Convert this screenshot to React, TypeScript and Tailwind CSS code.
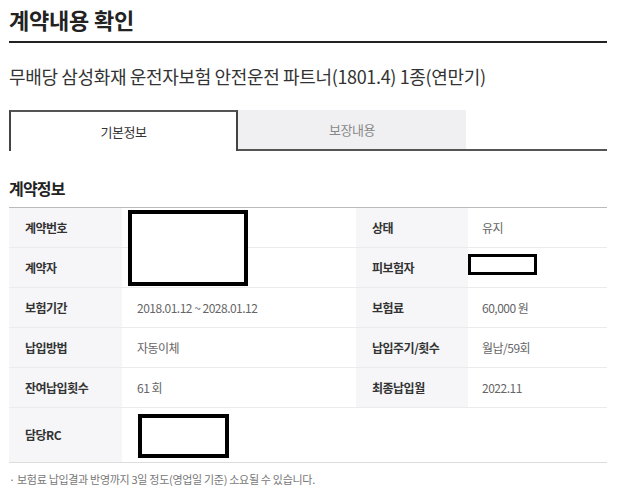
import React from 'react';

const rows: { l1: string; v1: string; l2?: string; v2?: string }[] = [
  { l1: '계약번호', v1: '', l2: '상태', v2: '유지' },
  { l1: '계약자', v1: '', l2: '피보험자', v2: '' },
  { l1: '보험기간', v1: '2018.01.12 ~ 2028.01.12', l2: '보험료', v2: '60,000 원' },
  { l1: '납입방법', v1: '자동이체', l2: '납입주기/횟수', v2: '월납/59회' },
  { l1: '잔여납입횟수', v1: '61 회', l2: '최종납입월', v2: '2022.11' },
];

const font = { fontFamily: '"Noto Sans CJK KR", "Noto Sans", sans-serif' };

export default function App() {
  return (
    <div className="relative w-[620px] h-[498px] bg-white text-[#222] pl-[9px] pr-[13px]" style={font}>
      {/* Title */}
      <h1 className="pt-[4px] h-[41px] text-[22px] font-bold tracking-[-0.2px] leading-[30px]">계약내용 확인</h1>
      <div className="h-[2px] bg-[#222]" />

      {/* Product name */}
      <p className="mt-[19px] text-[18px] tracking-[-0.35px] leading-[28px] text-[#333]">
        무배당 삼성화재 운전자보험 안전운전 파트너(1801.4) 1종(연만기)
      </p>

      {/* Tabs */}
      <div className="mt-[20px] flex h-[41px]">
        <div className="w-[229px] border-t-2 border-x-2 border-[#444] border-t-[#555] flex items-center justify-center text-[13px] text-[#333] tracking-[-0.5px]">
          기본정보
        </div>
        <div className="flex-1 flex items-end border-b-2 border-[#555]">
          <div className="w-[228px] h-full bg-[#f0f0f2] flex items-center justify-center text-[13px] text-[#888] tracking-[-0.5px]">
            보장내용
          </div>
        </div>
      </div>

      {/* Section */}
      <h2 className="mt-[25px] text-[16px] font-bold tracking-[-0.8px] leading-[24px]">계약정보</h2>

      <div className="mt-[7px] border-t border-[#bbb]">
        {rows.map((r) => (
          <div key={r.l1} className="grid grid-cols-[113px_234px_112px_1fr] h-[40px] border-b border-[#ebebeb] text-[12px] tracking-[-0.5px]">
            <div className="bg-[#f6f6f8] flex items-center pl-[16px] font-bold text-[#333]">{r.l1}</div>
            <div className="flex items-center pl-[15px] text-[#666]">{r.v1}</div>
            <div className="bg-[#f6f6f8] flex items-center pl-[16px] font-bold text-[#333]">{r.l2}</div>
            <div className="flex items-center pl-[14px] text-[#666]">{r.v2}</div>
          </div>
        ))}
        <div className="grid grid-cols-[113px_1fr] h-[55px] border-b border-[#ddd] text-[12px] tracking-[-0.5px]">
          <div className="bg-[#f6f6f8] flex items-center pl-[16px] font-bold text-[#333]">담당RC</div>
          <div />
        </div>
      </div>

      <p className="mt-[8px] text-[11px] text-[#777] tracking-[-0.3px]">· 보험료 납입결과 반영까지 3일 정도(영업일 기준) 소요될 수 있습니다.</p>

      {/* Redaction boxes */}
      <div className="absolute left-[128px] top-[210px] w-[120px] h-[76px] border-[4px] border-black bg-white" />
      <div className="absolute left-[468px] top-[254px] w-[69px] h-[21px] border-[3px] border-black bg-white" />
      <div className="absolute left-[138px] top-[414px] w-[91px] h-[44px] border-[4px] border-black bg-white" />
    </div>
  );
}
